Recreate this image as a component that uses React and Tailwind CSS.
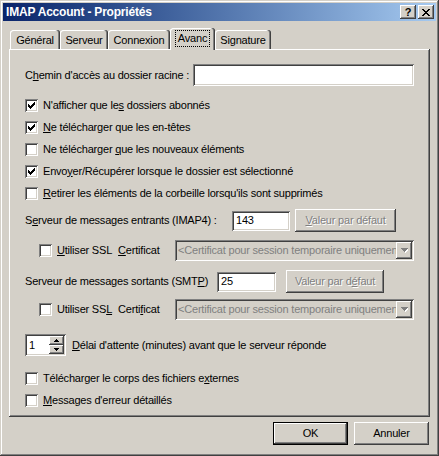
import React from 'react'

const RAISED = 'shadow-[inset_-1px_-1px_#404040,inset_1px_1px_#fff,inset_-2px_-2px_#808080,inset_2px_2px_#d4d0c8]'
const SUNKEN = 'shadow-[inset_1px_1px_#808080,inset_-1px_-1px_#fff,inset_2px_2px_#404040,inset_-2px_-2px_#d4d0c8]'
const FRAME = 'shadow-[inset_-1px_-1px_#404040,inset_1px_1px_#d4d0c8,inset_-2px_-2px_#808080,inset_2px_2px_#fff]'
const DEFAULT_BTN = 'shadow-[inset_0_0_0_1px_#000,inset_-2px_-2px_#404040,inset_2px_2px_#fff,inset_-3px_-3px_#808080,inset_3px_3px_#d4d0c8]'
const TAB = 'shadow-[inset_-1px_0_#404040,inset_-2px_0_#808080,inset_1px_1px_#fff]'
const GRAYED = 'text-[#808080] [text-shadow:1px_1px_0_#fff]'

const CHECK_PIXELS = [
    [3, [9]],
    [4, [8, 9]],
    [5, [3, 7, 8, 9]],
    [6, [3, 4, 6, 7, 8]],
    [7, [3, 4, 5, 6, 7]],
    [8, [4, 5, 6]],
    [9, [5]],
]

function Check({ checked }) {
    return (
        <span className={`block w-[13px] h-[13px] shrink-0 bg-white ${SUNKEN}`}>
            {checked && (
                <svg width="13" height="13" viewBox="0 0 13 13" shapeRendering="crispEdges">
                    {CHECK_PIXELS.map(([y, xs]) =>
                        xs.map(x => <rect key={`${x}-${y}`} x={x} y={y} width="1" height="1" fill="#000" />)
                    )}
                </svg>
            )}
        </span>
    )
}

function CheckRow({ checked, children }) {
    return (
        <div className="h-[22px] flex items-center gap-[5px]">
            <Check checked={checked} />
            <span className="whitespace-nowrap">{children}</span>
        </div>
    )
}

function Button({ children, disabled, isDefault, className = '' }) {
    return (
        <div className={`h-[23px] flex items-center justify-center bg-[#d4d0c8] ${isDefault ? DEFAULT_BTN : RAISED} ${disabled ? GRAYED : ''} ${className}`}>
            <span className="whitespace-nowrap">{children}</span>
        </div>
    )
}

function Field({ value, className = '' }) {
    return (
        <div className={`h-[20px] bg-white ${SUNKEN} flex items-center pl-[4px] ${className}`}>{value}</div>
    )
}

function Combo() {
    return (
        <div className={`ml-auto w-[239px] h-[21px] bg-[#d4d0c8] ${SUNKEN} flex items-center pl-[3px] pr-[2px]`}>
            <span className="flex-1 text-[#808080] whitespace-nowrap overflow-hidden">&lt;Certificat pour session temporaire uniquement&gt;</span>
            <div className={`w-[16px] h-[17px] shrink-0 flex items-center justify-center ${RAISED}`}>
                <svg width="7" height="5" viewBox="0 0 7 5" shapeRendering="crispEdges">
                    <path d="M1 1h7v1H1zM2 2h5v1H2zM3 3h3v1H3zM4 4h1v1H4z" fill="#fff" />
                    <path d="M0 0h7v1H0zM1 1h5v1H1zM2 2h3v1H2zM3 3h1v1H3z" fill="#808080" />
                </svg>
            </div>
        </div>
    )
}

function SslRow({ children }) {
    return (
        <div className="h-[21px] flex items-center pl-[30px] pr-[16px]">
            <Check />
            {children}
            <Combo />
        </div>
    )
}

function Tab({ label, width, active }) {
    if (active) {
        return (
            <div className={`relative z-10 h-[22px] -mb-[1px] rounded-t-[3px] bg-[#d4d0c8] ${TAB} flex justify-center pt-[3px]`} style={{ width }}>
                <span className="h-[15px] px-[2px] leading-[14px] outline outline-1 outline-dotted outline-black">{label}</span>
            </div>
        )
    }
    return (
        <div className={`h-[19px] rounded-t-[3px] ${TAB} flex justify-center pt-[4px]`} style={{ width }}>
            {label}
        </div>
    )
}

export default function App() {
    return (
        <div className={`w-[439px] h-[456px] bg-[#d4d0c8] ${FRAME} p-[3px] text-[11px] leading-[13px] tracking-[-0.2px] text-black font-['Liberation_Sans',Arial,sans-serif] select-none`}>
            {/* title bar */}
            <div className="h-[18px] bg-linear-to-r from-[#0a246a] to-[#a6caf0] flex items-center pl-[3px] pr-[2px]">
                <span className="flex-1 font-bold text-white text-[12px]">IMAP Account - Propriétés</span>
                <div className="flex gap-[2px]">
                    <div className={`w-[16px] h-[14px] bg-[#d4d0c8] ${RAISED} flex items-center justify-center font-bold text-[11px] leading-none pt-[1px]`}>?</div>
                    <div className={`w-[16px] h-[14px] bg-[#d4d0c8] ${RAISED} flex items-center justify-center`}>
                        <svg width="8" height="7" viewBox="0 0 8 7" shapeRendering="crispEdges">
                            <path d="M0 0h2v1h1v1h2V1h1V0h2v1H7v1H6v1H5v1h1v1h1v1h1v1H6V6H5V5H3v1H2v1H0V6h1V5h1V4h1V3H2V2H1V1H0z" fill="#000" />
                        </svg>
                    </div>
                </div>
            </div>

            {/* tabs */}
            <div className="mt-[7px] h-[21px] flex items-end pl-[7px]">
                <Tab label="Général" width={50} />
                <Tab label="Serveur" width={48} />
                <Tab label="Connexion" width={62} />
                <Tab label="Avanc" width={45} active />
                <Tab label="Signature" width={56} />
            </div>

            {/* tab page */}
            <div className={`ml-[6px] w-[421px] h-[368px] ${RAISED} flex flex-col`}>
                <div className="mt-[15px] h-[22px] flex items-center pl-[16px] pr-[16px]">
                    <span className="whitespace-nowrap">C<u>h</u>emin d'accès au dossier racine :</span>
                    <div className={`ml-auto w-[221px] h-[22px] shrink-0 bg-white ${SUNKEN}`} />
                </div>

                <div className="mt-[8px] pl-[16px] flex flex-col">
                    <CheckRow checked>N'afficher que le<u>s</u> dossiers abonnés</CheckRow>
                    <CheckRow checked><u>N</u>e télécharger que les en-têtes</CheckRow>
                    <CheckRow>Ne télécharger <u>q</u>ue les nouveaux éléments</CheckRow>
                    <CheckRow checked>Envo<u>y</u>er/Récupérer lorsque le dossier est sélectionné</CheckRow>
                    <CheckRow><u>R</u>etirer les éléments de la corbeille lorsqu'ils sont supprimés</CheckRow>
                </div>

                <div className="mt-[5px] h-[23px] flex items-center pl-[16px]">
                    <span className="w-[207px] shrink-0 whitespace-nowrap">S<u>e</u>rveur de messages entrants (IMAP4) :</span>
                    <Field value="143" className="w-[58px]" />
                    <Button disabled className="ml-[5px] w-[101px]"><u>V</u>aleur par défaut</Button>
                </div>

                <div className="mt-[8px]">
                    <SslRow>
                        <span className="ml-[5px] whitespace-nowrap"><u>U</u>tiliser SSL</span>
                        <span className="ml-[6px] whitespace-nowrap"><u>C</u>ertificat</span>
                    </SslRow>
                </div>

                <div className="mt-[9px] h-[23px] flex items-center pl-[16px]">
                    <span className="w-[192px] shrink-0 whitespace-nowrap">Serveur de messages sortants (SMT<u>P</u>)</span>
                    <Field value="25" className="w-[59px]" />
                    <Button disabled className="ml-[10px] w-[98px]">Valeur par d<u>é</u>faut</Button>
                </div>

                <div className="mt-[6px]">
                    <SslRow>
                        <span className="ml-[5px] whitespace-nowrap">Utiliser SS<u>L</u></span>
                        <span className="ml-[6px] whitespace-nowrap">Certi<u>f</u>icat</span>
                    </SslRow>
                </div>

                <div className="mt-[14px] h-[22px] flex items-center pl-[16px]">
                    <div className={`w-[41px] h-[22px] bg-white ${SUNKEN} flex items-center p-[2px]`}>
                        <span className="flex-1 pl-[2px]">1</span>
                        <div className="w-[15px] h-[18px] flex flex-col">
                            <div className={`h-[9px] bg-[#d4d0c8] ${RAISED} flex items-center justify-center`}>
                                <svg width="5" height="3" viewBox="0 0 5 3" shapeRendering="crispEdges"><path d="M2 0h1v1h1v1h1v1H0V2h1V1h1z" fill="#000" /></svg>
                            </div>
                            <div className={`h-[9px] bg-[#d4d0c8] ${RAISED} flex items-center justify-center`}>
                                <svg width="5" height="3" viewBox="0 0 5 3" shapeRendering="crispEdges"><path d="M0 0h5v1H4v1H3v1H2V2H1V1H0z" fill="#000" /></svg>
                            </div>
                        </div>
                    </div>
                    <span className="ml-[6px] whitespace-nowrap"><u>D</u>élai d'attente (minutes) avant que le serveur réponde</span>
                </div>

                <div className="mt-[11px] pl-[16px] flex flex-col">
                    <CheckRow>Télécharger le corps des fichiers e<u>x</u>ternes</CheckRow>
                    <CheckRow><u>M</u>essages d'erreur détaillés</CheckRow>
                </div>
            </div>

            {/* dialog buttons */}
            <div className="mt-[5px] flex justify-end gap-[6px] pr-[7px]">
                <Button isDefault className="w-[75px]">OK</Button>
                <Button className="w-[75px]">Annuler</Button>
            </div>
        </div>
    )
}
